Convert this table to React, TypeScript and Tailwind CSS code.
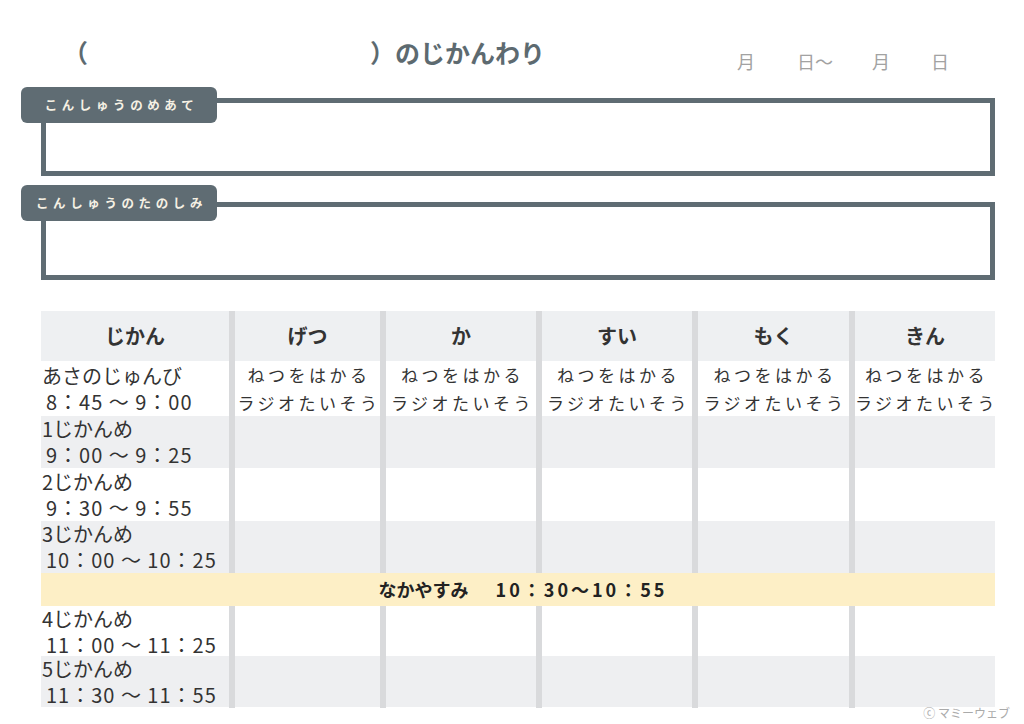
const jp = "font-['Noto_Sans_CJK_JP','Noto_Sans',sans-serif]";

const days = ["げつ", "か", "すい", "もく", "きん"];

type Period = {
  label: string;
  time: string;
  h: string;
  bg: string;
  morning?: boolean;
};

const before: Period[] = [
  { label: "あさのじゅんび", time: "8：45 ～ 9：00", h: "h-[55px]", bg: "bg-white", morning: true },
  { label: "1じかんめ", time: "9：00 ～ 9：25", h: "h-[52px]", bg: "bg-[#eeeff1]" },
  { label: "2じかんめ", time: "9：30 ～ 9：55", h: "h-[53px]", bg: "bg-white" },
  { label: "3じかんめ", time: "10：00 ～ 10：25", h: "h-[52px]", bg: "bg-[#eeeff1]" },
];

const after: Period[] = [
  { label: "4じかんめ", time: "11：00 ～ 11：25", h: "h-[50px]", bg: "bg-white" },
  { label: "5じかんめ", time: "11：30 ～ 11：55", h: "h-[51px]", bg: "bg-[#eeeff1]" },
];

const cols = "grid grid-cols-[188px_151px_156px_156px_157px_146px]";

function NoteBox({ title, labelTop }: { title: string; labelTop: string }) {
  return (
    <div className="relative h-[78px] border-[5px] border-[#5f6c73]">
      {/* ラベル */}
      <div
        className={`absolute -left-[25px] ${labelTop} flex h-[36px] w-[196px] items-center justify-center rounded-[6px] bg-[#5f6c73] pl-[5px] text-[12.5px] font-bold tracking-[4.6px] text-[#f6f1e4]`}
      >
        {title}
      </div>
    </div>
  );
}

function Row({ p }: { p: Period }) {
  return (
    <div className={`${cols} ${p.h} ${p.bg}`}>
      <div className="flex flex-col justify-center text-[20px] leading-[26px] text-[#333]">
        <div className="pl-[1px]">{p.label}</div>
        <div className="pl-[5px] tracking-[1px] whitespace-nowrap">{p.time}</div>
      </div>
      {days.map((d) => (
        <div
          key={d}
          className="flex flex-col items-center justify-center border-l-[6px] border-[#d9dadc] pl-[3px] text-[17px] leading-[28px] tracking-[3.5px] whitespace-nowrap text-[#333]"
        >
          {p.morning && (
            <>
              <div>ねつをはかる</div>
              <div>ラジオたいそう</div>
            </>
          )}
        </div>
      ))}
    </div>
  );
}

export default function App() {
  return (
    <div className={`relative h-[724px] w-[1024px] overflow-hidden bg-white ${jp}`}>
      {/* タイトル */}
      <div className="flex h-[98px] pt-[37px]">
        <div className="ml-[63px] flex text-[25px] font-bold leading-[30px] text-[#5d6a70]">
          <span>（</span>
          <span className="ml-[282px]">）のじかんわり</span>
        </div>
        <div className="ml-[192px] mt-[12px] flex text-[18px] leading-[24px] text-[#a2a2a2]">
          <span>月</span>
          <span className="ml-[42px]">日～</span>
          <span className="ml-[39px]">月</span>
          <span className="ml-[41px]">日</span>
        </div>
      </div>

      <div className="ml-[41px] w-[954px]">
        <NoteBox title="こんしゅうのめあて" labelTop="-top-[16px]" />
        <div className="mt-[26px]">
          <NoteBox title="こんしゅうのたのしみ" labelTop="-top-[22px]" />
        </div>

        {/* じかんわり表 */}
        <div className="mt-[31px]">
          <div className={`${cols} h-[50px] bg-[#eef0f2]`}>
            <div className="flex items-center justify-center text-[20px] font-bold text-[#333]">じかん</div>
            {days.map((d) => (
              <div
                key={d}
                className="flex items-center justify-center border-l-[6px] border-[#d9dadc] text-[20px] font-bold text-[#333]"
              >
                {d}
              </div>
            ))}
          </div>
          {before.map((p) => (
            <Row key={p.label} p={p} />
          ))}
          <div className="flex h-[33px] items-center justify-center bg-[#fdefc6] pl-[10px] text-[18px] font-bold text-[#222]">
            <span>なかやすみ</span>
            <span className="ml-[27px] tracking-[3px]">10：30～10：55</span>
          </div>
          {after.map((p) => (
            <Row key={p.label} p={p} />
          ))}
        </div>
      </div>

      <div className="flex justify-end pr-[14px] text-[12px] leading-[12px] text-[#aaa]">ⓒ マミーウェブ</div>
    </div>
  );
}
